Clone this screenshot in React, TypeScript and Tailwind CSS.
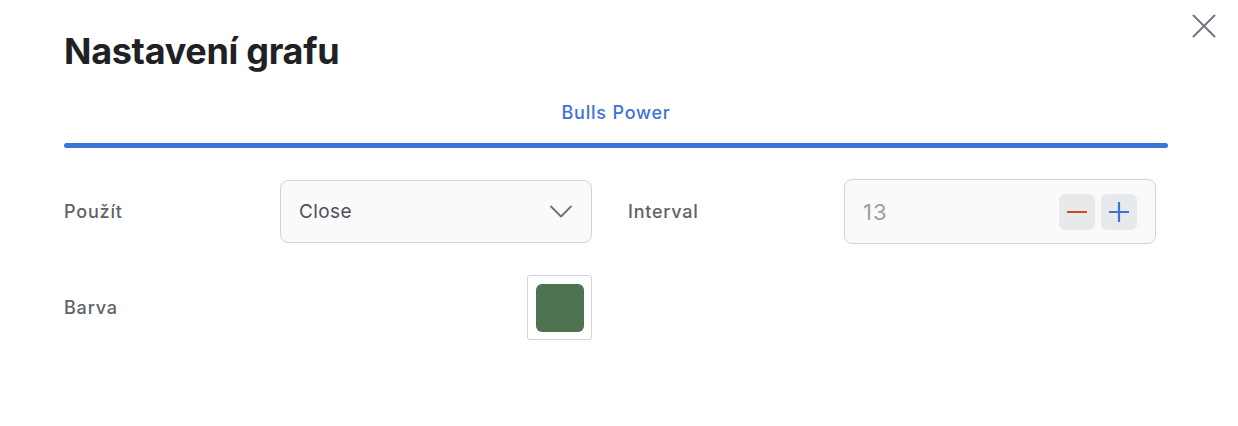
import { useState } from "react";

function Chevron() {
  return (
    <svg width="22" height="13" viewBox="0 0 22 13" fill="none">
      <path d="M1 1.5l10 10 10-10" stroke="#6b7078" strokeWidth="1.8" strokeLinecap="round" strokeLinejoin="round" />
    </svg>
  );
}

export default function App() {
  const [interval, setInterval] = useState(13);

  return (
    <div className="relative h-[426px] w-[1238px] bg-white font-['Inter',sans-serif]">
      <button className="absolute left-[1190px] top-[12px] flex h-[28px] w-[28px] items-center justify-center" title="Zavřít">
        <svg width="24" height="24" viewBox="0 0 24 24" fill="none">
          <path d="M1.5 1.5l21 21M22.5 1.5l-21 21" stroke="#737780" strokeWidth="2" strokeLinecap="round" />
        </svg>
      </button>

      <div className="pl-16 pr-[70px] pt-[29px]">
        <h1 className="text-[36px] font-bold leading-[44px] tracking-[-0.3px] text-[#202124]">Nastavení grafu</h1>

        <div className="mt-[28px] text-center text-[18px] font-medium leading-[24px] tracking-[0.8px] text-[#3d73d8]">Bulls Power</div>
        <div className="mt-[18px] h-[5px] rounded-full bg-[#3d73d8]" />

        <div className="mt-[31px] grid grid-cols-[216px_348px_216px_312px] items-center gap-y-[31px]">
          <div className="text-[18px] font-medium tracking-[0.8px] text-[#5f6368]">Použít</div>
          <div className="flex h-[63px] w-[312px] items-center justify-between rounded-[8px] border border-[#d4d4d6] bg-[#fafafa] pl-[18px] pr-[19px]">
            <span className="pt-[2px] text-[19px] tracking-[0.4px] text-[#4d5158]">Close</span>
            <Chevron />
          </div>

          <div className="text-[18px] font-medium tracking-[0.75px] text-[#5f6368]">Interval</div>
          <div className="flex h-[65px] w-[312px] items-center justify-between rounded-[8px] border border-[#d4d4d6] bg-[#fafafa] pl-[18px] pr-[18px]">
            <span className="pt-[1px] text-[22px] tracking-[1px] text-[#9aa0a6]">{interval}</span>
            <div className="flex gap-[6px]">
              <button
                onClick={() => setInterval((v) => Math.max(1, v - 1))}
                className="flex h-[36px] w-[36px] items-center justify-center rounded-[6px] bg-[#e8e9eb]"
              >
                <span className="h-[2px] w-[20px] bg-[#d2462b]" />
              </button>
              <button
                onClick={() => setInterval((v) => v + 1)}
                className="flex h-[36px] w-[36px] items-center justify-center rounded-[6px] bg-[#e8e9eb]"
              >
                <svg width="20" height="20" viewBox="0 0 20 20">
                  <path d="M0 10h20M10 0v20" stroke="#3d73d8" strokeWidth="2.2" />
                </svg>
              </button>
            </div>
          </div>

          <div className="text-[18px] font-medium tracking-[0.8px] text-[#5f6368]">Barva</div>
          <div className="flex w-[312px] justify-end">
            <div className="flex h-[65px] w-[65px] items-center justify-center rounded-[3px] border border-[#d4d4d6] bg-white">
              <div className="h-[48px] w-[48px] rounded-[6px] bg-[#4e7350]" />
            </div>
          </div>
          <div />
          <div />
        </div>
      </div>
    </div>
  );
}
